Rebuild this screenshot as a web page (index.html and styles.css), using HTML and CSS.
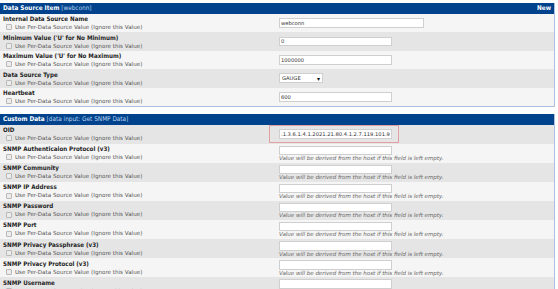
FILE: index.html
```html
<!DOCTYPE html>
<html>
<head>
<meta charset="utf-8">
<link rel="stylesheet" href="styles.css">
</head>
<body>
<div class="page">
  <section class="panel">
    <div class="panel-head"><span><b>Data Source Item</b> <span class="sub">[webconn]</span></span><b class="new">New</b></div>
    <div class="row light">
      <div class="lab"><div class="name">Internal Data Source Name</div><label class="chk"><span class="box"></span>Use Per-Data Source Value (Ignore this Value)</label></div>
      <div class="val"><input class="txt wide" value="webconn"></div>
    </div>
    <div class="row dark">
      <div class="lab"><div class="name">Minimum Value ('U' for No Minimum)</div><label class="chk"><span class="box"></span>Use Per-Data Source Value (Ignore this Value)</label></div>
      <div class="val"><input class="txt" value="0"></div>
    </div>
    <div class="row light">
      <div class="lab"><div class="name">Maximum Value ('U' for No Maximum)</div><label class="chk"><span class="box"></span>Use Per-Data Source Value (Ignore this Value)</label></div>
      <div class="val"><input class="txt" value="1000000"></div>
    </div>
    <div class="row dark">
      <div class="lab"><div class="name">Data Source Type</div><label class="chk"><span class="box"></span>Use Per-Data Source Value (Ignore this Value)</label></div>
      <div class="val"><span class="sel"><span>GAUGE</span><span class="arrow">▾</span></span></div>
    </div>
    <div class="row light">
      <div class="lab"><div class="name">Heartbeat</div><label class="chk"><span class="box"></span>Use Per-Data Source Value (Ignore this Value)</label></div>
      <div class="val"><input class="txt" value="600"></div>
    </div>
  </section>

  <section class="panel second">
    <div class="panel-head"><span><b>Custom Data</b> <span class="sub">[data input: Get SNMP Data]</span></span></div>
    <div class="row dark">
      <div class="lab"><div class="name">OID</div><label class="chk"><span class="box"></span>Use Per-Data Source Value (Ignore this Value)</label></div>
      <div class="val"><div class="mark"><input class="txt" value=".1.3.6.1.4.1.2021.21.80.4.1.2.7.119.101.98"></div></div>
    </div>
    <div class="row light">
      <div class="lab"><div class="name">SNMP Authenticaion Protocol (v3)</div><label class="chk"><span class="box"></span>Use Per-Data Source Value (Ignore this Value)</label></div>
      <div class="val col"><input class="txt"><span class="hint">Value will be derived from the host if this field is left empty.</span></div>
    </div>
    <div class="row dark">
      <div class="lab"><div class="name">SNMP Community</div><label class="chk"><span class="box"></span>Use Per-Data Source Value (Ignore this Value)</label></div>
      <div class="val col"><input class="txt"><span class="hint">Value will be derived from the host if this field is left empty.</span></div>
    </div>
    <div class="row light">
      <div class="lab"><div class="name">SNMP IP Address</div><label class="chk"><span class="box"></span>Use Per-Data Source Value (Ignore this Value)</label></div>
      <div class="val col"><input class="txt"><span class="hint">Value will be derived from the host if this field is left empty.</span></div>
    </div>
    <div class="row dark">
      <div class="lab"><div class="name">SNMP Password</div><label class="chk"><span class="box"></span>Use Per-Data Source Value (Ignore this Value)</label></div>
      <div class="val col"><input class="txt"><span class="hint">Value will be derived from the host if this field is left empty.</span></div>
    </div>
    <div class="row light">
      <div class="lab"><div class="name">SNMP Port</div><label class="chk"><span class="box"></span>Use Per-Data Source Value (Ignore this Value)</label></div>
      <div class="val col"><input class="txt"><span class="hint">Value will be derived from the host if this field is left empty.</span></div>
    </div>
    <div class="row dark">
      <div class="lab"><div class="name">SNMP Privacy Passphrase (v3)</div><label class="chk"><span class="box"></span>Use Per-Data Source Value (Ignore this Value)</label></div>
      <div class="val col"><input class="txt"><span class="hint">Value will be derived from the host if this field is left empty.</span></div>
    </div>
    <div class="row light">
      <div class="lab"><div class="name">SNMP Privacy Protocol (v3)</div><label class="chk"><span class="box"></span>Use Per-Data Source Value (Ignore this Value)</label></div>
      <div class="val col"><input class="txt"><span class="hint">Value will be derived from the host if this field is left empty.</span></div>
    </div>
    <div class="row dark">
      <div class="lab"><div class="name">SNMP Username</div><label class="chk"><span class="box"></span>Use Per-Data Source Value (Ignore this Value)</label></div>
      <div class="val col"><input class="txt"><span class="hint">Value will be derived from the host if this field is left empty.</span></div>
    </div>
  </section>
</div>
</body>
</html>
```
FILE: styles.css
```css
html, body {
  margin: 0;
  padding: 0;
  background: #ffffff;
}
body {
  font-family: "DejaVu Sans", Verdana, sans-serif;
  color: #222;
}
.page {
  width: 555px;
  padding-top: 3px;
}
.panel {
  border: 1px solid #a9c0de;
  border-left: none;
  border-top: none;
}
.second {
  margin-top: 7px;
}
.panel-head {
  display: flex;
  justify-content: space-between;
  align-items: center;
  background: #00438c;
  color: #fff;
  height: 10.5px;
  padding: 0 3px;
  font-family: "DejaVu Sans Condensed", "DejaVu Sans", sans-serif;
  font-size: 6.4px;
  line-height: 10px;
  white-space: nowrap;
}
.panel-head b {
  font-weight: bold;
}
.panel-head .sub {
  color: #b9d2f0;
}
.row {
  display: grid;
  grid-template-columns: 277px 1fr;
  height: 18.5px;
}
.second .row {
  height: 19.1px;
}
.light { background: #f5f5f5; }
.dark { background: #e5e5e5; }
.lab {
  padding: 1.5px 0 0 3px;
}
.name {
  font-family: "DejaVu Sans Condensed", "DejaVu Sans", sans-serif;
  font-size: 6.2px;
  font-weight: bold;
  line-height: 8px;
  color: #1e1e1e;
  white-space: nowrap;
}
.chk {
  display: flex;
  align-items: center;
  font-size: 5.6px;
  line-height: 8.5px;
  color: #555;
  white-space: nowrap;
}
.box {
  width: 4px;
  height: 4px;
  border: 1px solid #b8b8b8;
  border-radius: 1px;
  background: #ececec;
  margin: 0 3px 0 3px;
}
.val {
  display: flex;
  align-items: center;
  padding-left: 2px;
}
.val.col {
  flex-direction: column;
  align-items: flex-start;
  justify-content: flex-start;
  padding-top: 2px;
}
.txt {
  box-sizing: border-box;
  width: 113px;
  height: 9.5px;
  border: 1px solid #cfcfcf;
  background: #fff;
  font-family: "DejaVu Sans", sans-serif;
  font-size: 5.2px;
  color: #333;
  padding: 0 1px;
  margin: 0;
  outline: none;
}
.txt.wide {
  width: 145px;
}
.sel {
  box-sizing: border-box;
  display: flex;
  justify-content: space-between;
  align-items: center;
  width: 44px;
  height: 10px;
  border: 1px solid #cfcfcf;
  background: #fff;
  font-size: 5.2px;
  color: #333;
  padding: 0 2px;
}
.arrow {
  font-size: 6px;
  color: #111;
}
.mark {
  display: flex;
  align-items: center;
  border: 1px solid #e3a0a4;
  margin-left: -10px;
  padding: 3px 6px 3px 9px;
}
.hint {
  font-size: 5.5px;
  font-style: italic;
  color: #666;
  line-height: 7px;
  white-space: nowrap;
}
```
